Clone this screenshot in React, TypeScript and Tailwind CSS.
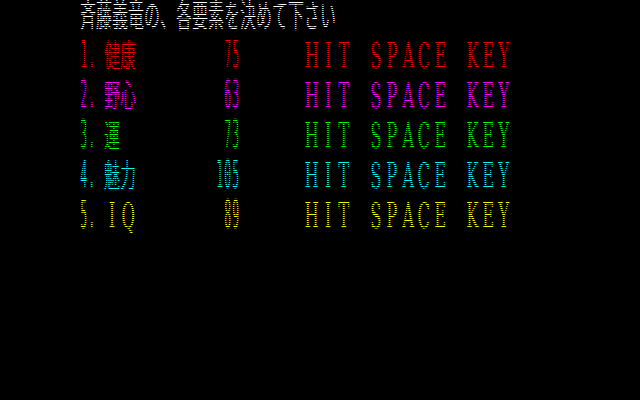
import React from "react";

const HALF = "'DejaVu Sans Mono', 'Liberation Mono', monospace";
const SERIF = "'DejaVu Serif', 'Liberation Serif', serif";
const CJK = "'Noto Sans CJK JP', 'Noto Sans CJK SC', sans-serif";

function Half({ text }: { text: string }) {
  return (
    <>
      {text.split("").map((c, i) => (
        <span key={i} className="flex w-[8px] h-[40px] justify-center overflow-visible">
          <span
            className="block whitespace-pre text-[22px] leading-none mt-[-4px] origin-top [transform:scale(0.52,1.75)]"
            style={{ fontFamily: HALF }}
          >
            {c}
          </span>
        </span>
      ))}
    </>
  );
}

function FullLatin({ text }: { text: string }) {
  return (
    <>
      {text.split("").map((c, i) => (
        <span key={i} className="flex w-[16px] h-[40px] justify-center overflow-visible">
          <span
            className="block whitespace-pre text-[20px] leading-none mt-[-2px] origin-top [transform:scale(0.82,1.75)]"
            style={{ fontFamily: SERIF }}
          >
            {c}
          </span>
        </span>
      ))}
    </>
  );
}

function Kanji({ text }: { text: string }) {
  return (
    <>
      {text.split("").map((c, i) => (
        <span key={i} className="flex w-[16px] h-[40px] justify-center overflow-visible">
          <span
            className="block whitespace-pre text-[16px] font-normal leading-none mt-[-3px] origin-top [transform:scale(1,2)]"
            style={{ fontFamily: CJK }}
          >
            {c}
          </span>
        </span>
      ))}
    </>
  );
}

type Row = { n: string; label: React.ReactNode; value: string; color: string };

const rows: Row[] = [
  { n: "1.", label: <Kanji text="健康" />, value: " 75", color: "text-[#ff0000]" },
  { n: "2.", label: <Kanji text="野心" />, value: " 63", color: "text-[#ff00ff]" },
  { n: "3.", label: <Kanji text="運" />, value: " 73", color: "text-[#00ff00]" },
  { n: "4.", label: <Kanji text="魅力" />, value: "105", color: "text-[#00ffff]" },
  { n: "5.", label: <FullLatin text="IQ" />, value: " 89", color: "text-[#ffff00]" },
];

export default function App() {
  return (
    <div className="relative w-[640px] h-[400px] bg-black overflow-hidden">
      <div className="flex flex-col pl-[80px]">
        <div className="flex h-[40px] text-white">
          <Kanji text="斉藤義竜の、各要素を決めて下さい" />
        </div>
        {rows.map((r, i) => (
          <div key={i} className={`flex h-[40px] ${r.color}`}>
            <Half text={r.n} />
            <span className="w-[8px]" />
            <div className="flex w-[112px]">{r.label}</div>
            <Half text={r.value} />
            <span className="w-[64px]" />
            <FullLatin text="HIT SPACE KEY" />
          </div>
        ))}
      </div>
      <div className="pointer-events-none absolute inset-0 bg-[repeating-linear-gradient(to_bottom,transparent_0px,transparent_1px,#000_1px,#000_2px)]" />
    </div>
  );
}
